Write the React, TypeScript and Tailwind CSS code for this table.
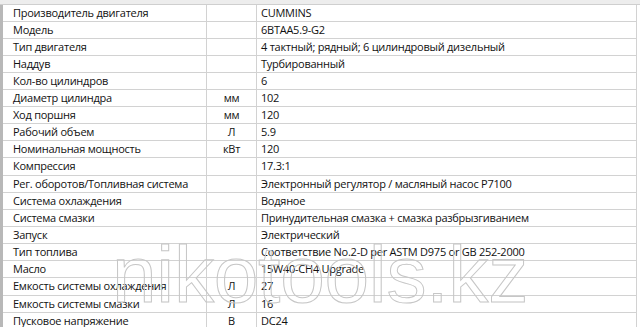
import React from "react";

const rows: [string, string, string][] = [
  ["Производитель двигателя", "", "CUMMINS"],
  ["Модель", "", "6BTAA5.9-G2"],
  ["Тип двигателя", "", "4 тактный; рядный; 6 цилиндровый дизельный"],
  ["Наддув", "", "Турбированный"],
  ["Кол-во цилиндров", "", "6"],
  ["Диаметр цилиндра", "мм", "102"],
  ["Ход поршня", "мм", "120"],
  ["Рабочий объем", "Л", "5.9"],
  ["Номинальная мощность", "кВт", "120"],
  ["Компрессия", "", "17.3:1"],
  ["Рег. оборотов/Топливная система", "", "Электронный регулятор / масляный насос P7100"],
  ["Система охлаждения", "", "Водяное"],
  ["Система смазки", "", "Принудительная смазка + смазка разбрызгиванием"],
  ["Запуск", "", "Электрический"],
  ["Тип топлива", "", "Соответствие No.2-D per ASTM D975 or GB 252-2000"],
  ["Масло", "", "15W40-CH4 Upgrade"],
  ["Емкость системы охлаждения", "Л", "27"],
  ["Емкость системы смазки", "Л", "16"],
  ["Пусковое напряжение", "В", "DC24"],
];

export default function App() {
  return (
    <div className="relative w-[640px] h-[327px] overflow-hidden bg-white font-['Open_Sans',sans-serif] text-[11px] tracking-[-0.25px] text-[#111111]">
      <div className="h-[5px] bg-[#ededed] border-b border-[#cfcfcf]" />
      <div className="flex">
        <div className="w-[3px] shrink-0 bg-[#b8b8b8]" />
        <div className="w-[634px] border-r border-[#d2d2d2]">
          {rows.map(([a, b, c], i) => (
            <div
              key={i}
              className={`grid grid-cols-[204px_50px_1fr] border-b border-[#d2d2d2] ${i === 9 || i === 16 ? "h-[18px]" : "h-[17px]"}`}
            >
              <div className="flex items-center pl-[10px] border-r border-[#d2d2d2] whitespace-nowrap">{a}</div>
              <div className="flex items-center justify-center border-r border-[#d2d2d2] whitespace-nowrap">{b}</div>
              <div className="flex items-center pl-[4px] whitespace-nowrap">{c}</div>
            </div>
          ))}
        </div>
      </div>
      <svg className="absolute left-0 top-0 pointer-events-none" width="640" height="327">
        <text
          x="112"
          y="302"
          fontSize="80"
          fontFamily="Liberation Sans, sans-serif"
          fill="none"
          stroke="#c6c6c6"
          strokeWidth="1"
          textLength="416"
          lengthAdjust="spacingAndGlyphs"
        >
          nikotools.kz
        </text>
      </svg>
    </div>
  );
}
